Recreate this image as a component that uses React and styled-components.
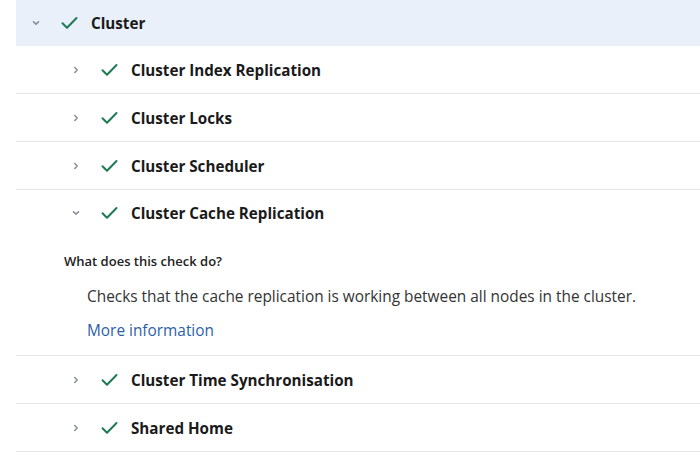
import React from 'react'
import styled, { createGlobalStyle } from 'styled-components'

const Global = createGlobalStyle`
  html, body {
    margin: 0;
    padding: 0;
    background: #fff;
  }
  body {
    font-family: "Open Sans", "Noto Sans", sans-serif;
    color: #172b4d;
  }
`;

const Tree = styled.div`
  margin-left: 16px;
  width: 684px;
`;

const Row = styled.div`
  display: flex;
  align-items: center;
  height: ${p => p.flat ? 46 : 47}px;
  padding-left: ${p => 12 + p.level * 40}px;
  background: ${p => p.active ? '#e9f0f9' : 'transparent'};
  border-bottom: ${p => p.flat ? 'none' : '1px solid #e4e6ea'};
`;

const Chevron = styled.span`
  display: flex;
  align-items: center;
  justify-content: center;
  width: 16px;
  height: 16px;
  margin-right: 16px;
  color: #8b8f96;
`;

const Check = styled.span`
  display: flex;
  align-items: center;
  justify-content: center;
  width: 18px;
  height: 18px;
  margin-right: 13px;
  color: #1f7a55;
`;

const Title = styled.span`
  font-size: 15.2px;
  font-weight: 700;
  color: #1a1a1a;
  white-space: nowrap;
`;

const Panel = styled.div`
  padding: 15px 0 12px 48px;
  border-bottom: 1px solid #e4e6ea;
`;

const Question = styled.div`
  font-size: 13px;
  font-weight: 600;
  line-height: 20px;
  color: #222;
`;

const Body = styled.div`
  padding-left: 23px;
  margin-top: 14px;
  font-size: 15.4px;
  line-height: 24px;
  color: #333;
  white-space: nowrap;
`;

const Link = styled.a`
  display: block;
  padding-left: 23px;
  margin-top: 10px;
  font-size: 15.4px;
  line-height: 24px;
  color: #2d5fa8;
  text-decoration: none;
`;

const ChevronIcon = ({ open }) => (
  <svg width="10" height="10" viewBox="0 0 10 10">
    <path
      d={open ? 'M2.5 3.8 L5 6.2 L7.5 3.8' : 'M3.8 2.5 L6.2 5 L3.8 7.5'}
      fill="none"
      stroke="currentColor"
      strokeWidth="1.6"
      strokeLinecap="round"
      strokeLinejoin="round"
    />
  </svg>
);

const CheckIcon = () => (
  <svg width="17" height="14" viewBox="0 0 17 14">
    <path d="M1.5 7.2 L6 11.8 L15.5 2" fill="none" stroke="currentColor" strokeWidth="2" strokeLinecap="round" strokeLinejoin="round" />
  </svg>
);

const Item = ({ level, open, active, flat, children }) => (
  <Row level={level} active={active} flat={flat}>
    <Chevron><ChevronIcon open={open} /></Chevron>
    <Check><CheckIcon /></Check>
    <Title>{children}</Title>
  </Row>
);

export default function App() {
  return (
    <>
      <Global />
      <Tree>
        <Item level={0} open active flat>Cluster</Item>
        <Item level={1}>Cluster Index Replication</Item>
        <Item level={1}>Cluster Locks</Item>
        <Item level={1}>Cluster Scheduler</Item>
        <Item level={1} open flat>Cluster Cache Replication</Item>
        <Panel>
          <Question>What does this check do?</Question>
          <Body>Checks that the cache replication is working between all nodes in the cluster.</Body>
          <Link href="#">More information</Link>
        </Panel>
        <Item level={1}>Cluster Time Synchronisation</Item>
        <Item level={1}>Shared Home</Item>
      </Tree>
    </>
  )
}
